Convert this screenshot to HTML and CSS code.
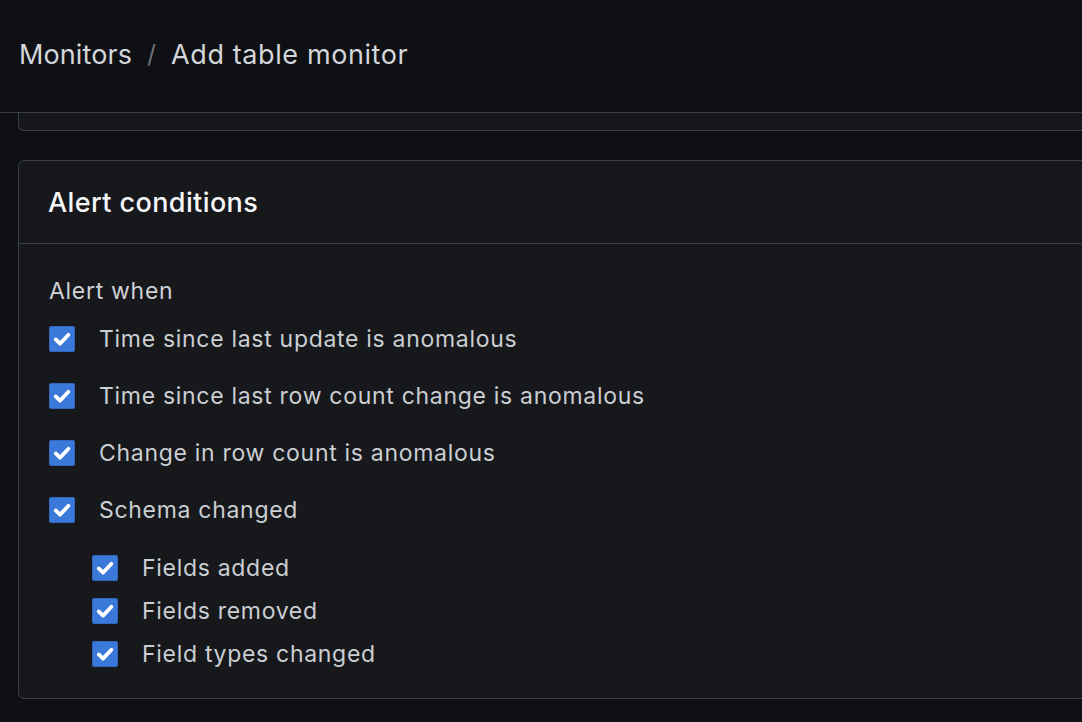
FILE: index.html
```html
<!DOCTYPE html>
<html lang="en">
<head>
<meta charset="utf-8">
<title>Add table monitor</title>
<link rel="stylesheet" href="styles.css">
</head>
<body>
<header class="topbar">
  <nav class="crumbs">
    <span class="crumb">Monitors</span>
    <span class="sep">/</span>
    <span class="crumb current">Add table monitor</span>
  </nav>
</header>
<main class="content">
  <section class="card card-prev"></section>
  <section class="card">
    <div class="card-head">
      <h2 class="card-title">Alert conditions</h2>
    </div>
    <div class="card-body">
      <div class="group-label">Alert when</div>
      <ul class="checks">
        <li class="check-row"><span class="box"><svg viewBox="0 0 16 16"><path d="M3.8 8.3l2.9 2.8 5.6-5.9"/></svg></span><span class="label">Time since last update is anomalous</span></li>
        <li class="check-row"><span class="box"><svg viewBox="0 0 16 16"><path d="M3.8 8.3l2.9 2.8 5.6-5.9"/></svg></span><span class="label">Time since last row count change is anomalous</span></li>
        <li class="check-row"><span class="box"><svg viewBox="0 0 16 16"><path d="M3.8 8.3l2.9 2.8 5.6-5.9"/></svg></span><span class="label">Change in row count is anomalous</span></li>
        <li class="check-row"><span class="box"><svg viewBox="0 0 16 16"><path d="M3.8 8.3l2.9 2.8 5.6-5.9"/></svg></span><span class="label">Schema changed</span></li>
      </ul>
      <ul class="checks sub">
        <li class="check-row"><span class="box"><svg viewBox="0 0 16 16"><path d="M3.8 8.3l2.9 2.8 5.6-5.9"/></svg></span><span class="label">Fields added</span></li>
        <li class="check-row"><span class="box"><svg viewBox="0 0 16 16"><path d="M3.8 8.3l2.9 2.8 5.6-5.9"/></svg></span><span class="label">Fields removed</span></li>
        <li class="check-row"><span class="box"><svg viewBox="0 0 16 16"><path d="M3.8 8.3l2.9 2.8 5.6-5.9"/></svg></span><span class="label">Field types changed</span></li>
      </ul>
    </div>
  </section>
</main>
</body>
</html>
```
FILE: styles.css
```css
html, body {
  margin: 0;
  padding: 0;
  background: #0e1014;
  overflow: hidden;
  height: 722px;
  font-family: Inter, "Noto Sans", "Liberation Sans", sans-serif;
}
.topbar {
  height: 113px;
  border-bottom: 1px solid #3a3f46;
  background: #0e1014;
  display: flex;
  align-items: center;
  padding-left: 19px;
  box-sizing: border-box;
  position: relative;
  z-index: 1;
}
.crumbs {
  display: flex;
  align-items: center;
  gap: 15px;
  font-size: 27px;
  color: #d3d6da;
  margin-top: -4px;
}
.crumb {
  letter-spacing: 0.1px;
}
.crumb.current {
  letter-spacing: 0.6px;
}
.sep {
  color: #6d7279;
  font-size: 25px;
}
.content {
  padding-left: 18px;
  display: flex;
  flex-direction: column;
  gap: 29px;
  margin-top: -1px;
}
.card {
  width: 1120px;
  background: #16181c;
  border: 1px solid #3a3f46;
  border-radius: 6px;
  box-sizing: border-box;
}
.card-prev {
  height: 19px;
  border-top: none;
  border-radius: 0 0 6px 6px;
}
.card-head {
  height: 83px;
  border-bottom: 1px solid #3a3f46;
  box-sizing: border-box;
  display: flex;
  align-items: center;
  padding-left: 29px;
}
.card-title {
  margin: 0;
  font-size: 27px;
  font-weight: 500;
  letter-spacing: 0.4px;
  color: #f4f6f8;
}
.card-body {
  padding: 33px 30px 27px;
}
.group-label {
  font-size: 23px;
  line-height: 28px;
  letter-spacing: 0.7px;
  color: #cfd2d6;
  margin-bottom: 17px;
}
.checks {
  list-style: none;
  margin: 0;
  padding: 0;
  display: flex;
  flex-direction: column;
  gap: 23px;
}
.checks.sub {
  margin-top: 24px;
  padding-left: 43px;
  gap: 9px;
}
.check-row {
  display: flex;
  align-items: center;
  gap: 24px;
  height: 34px;
}
.box {
  width: 26px;
  height: 26px;
  border-radius: 3px;
  background: #3a78d9;
  box-shadow: inset 0 0 0 1px #3368be;
  display: flex;
  align-items: center;
  justify-content: center;
  flex: none;
}
.box svg {
  width: 24px;
  height: 24px;
}
.box path {
  fill: none;
  stroke: #ffffff;
  stroke-width: 2.5;
  stroke-linecap: round;
  stroke-linejoin: round;
}
.label {
  font-size: 23px;
  letter-spacing: 0.7px;
  color: #cbced2;
}
```
